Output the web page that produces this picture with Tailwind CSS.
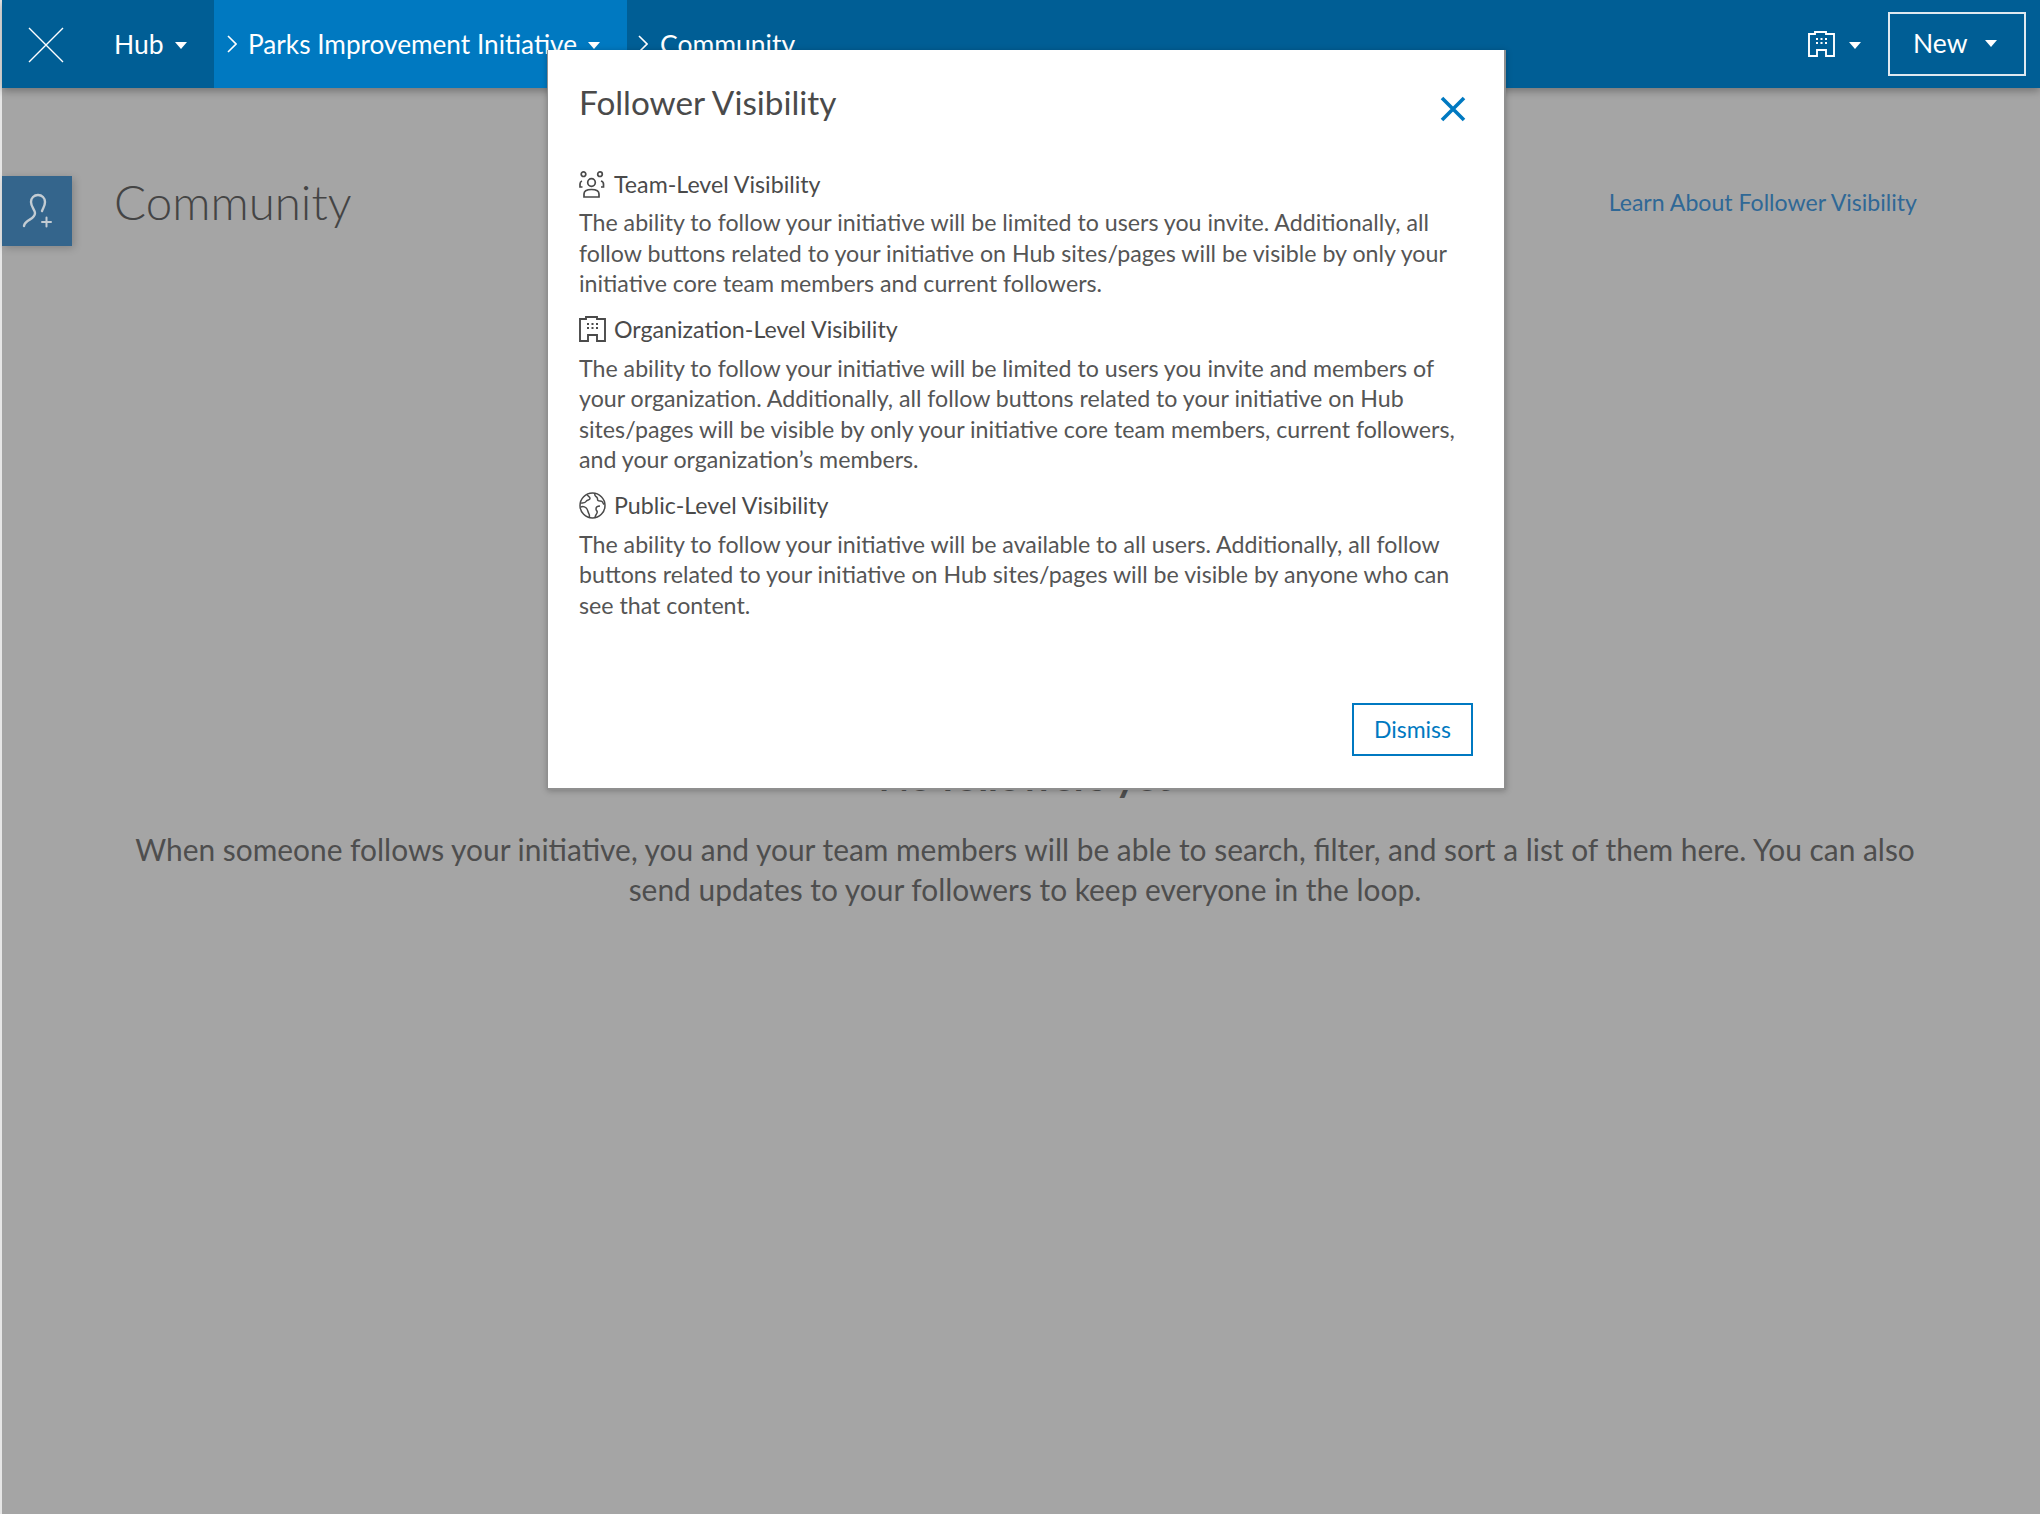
<!DOCTYPE html>
<html lang="en">
<head>
  <meta charset="UTF-8">
  <title>Community</title>
  <script src="https://cdn.jsdelivr.net/npm/@tailwindcss/browser@4"></script>
</head>
<body class="relative h-[1514px] overflow-hidden bg-[#e6e6e6] pl-[2px] font-['Lato','Liberation_Sans',sans-serif]">

  <div class="h-full bg-[#a5a5a5]">
    <!-- top bar -->
    <header class="relative z-10 flex h-[88px] items-center bg-[#005e95] text-white shadow-[0_3px_8px_rgba(0,0,0,0.3)]">
      <div class="flex h-full w-[212px] items-center">
        <svg class="ml-[26px] mt-[2px] h-[36px] w-[36px]" viewBox="0 0 36 36" fill="none" stroke="white" stroke-width="1.4"><path d="M1 1 L35 35 M35 1 L1 35"/></svg>
        <span class="ml-[50px] mt-[2px] text-[26.500px]">Hub</span>
        <svg class="ml-[11px] mt-[2px] h-[7px] w-[12px]" viewBox="0 0 12 7" fill="white"><path d="M0 0h12L6 7z"/></svg>
      </div>
      <div class="flex h-full w-[413px] items-center bg-[#0079c1]">
        <svg class="ml-[13px] h-[18px] w-[10px]" viewBox="0 0 10 18" fill="none" stroke="white" stroke-width="1.6"><path d="M1 1l8 8-8 8"/></svg>
        <span class="ml-[11px] mt-[2px] text-[26.200px]">Parks Improvement Initiative</span>
        <svg class="ml-[11px] mt-[2px] h-[7px] w-[12px]" viewBox="0 0 12 7" fill="white"><path d="M0 0h12L6 7z"/></svg>
      </div>
      <svg class="ml-[11px] h-[18px] w-[10px]" viewBox="0 0 10 18" fill="none" stroke="white" stroke-width="1.6"><path d="M1 1l8 8-8 8"/></svg>
      <span class="ml-[12px] mt-[2px] text-[26.500px]">Community</span>

      <div class="ml-auto flex items-center">
        <svg class="h-[26px] w-[27px]" viewBox="0 0 27 26" fill="none" stroke="white" stroke-width="1.9"><path d="M1 25V3h6V1h11v2h8v22h-8v-6H9v6z"/><path d="M8 8h2M12.500 8h2M17 8h2M8 12h2M12.500 12h2M17 12h2" stroke-width="2"/></svg>
        <svg class="ml-[14px] mt-[2px] h-[7px] w-[12px]" viewBox="0 0 12 7" fill="white"><path d="M0 0h12L6 7z"/></svg>
        <button class="ml-[27px] mr-[14px] flex h-[64px] w-[138px] items-center border-2 border-[#dfe9f0] pl-[23px]">
          <span class="text-[26.500px]">New</span>
          <svg class="ml-[17px] mt-[-2px] h-[7px] w-[12px]" viewBox="0 0 12 7" fill="white"><path d="M0 0h12L6 7z"/></svg>
        </button>
      </div>
    </header>

    <!-- page title -->
    <section class="flex items-start pt-[88px]">
      <div class="flex h-[70px] w-[70px] items-center justify-center bg-[#34658c] shadow-[2px_2px_8px_rgba(0,0,0,0.2)]">
        <svg class="h-[70px] w-[70px]" viewBox="0 0 70 70" fill="none" stroke="#c3ccd3" stroke-width="2.4" stroke-linecap="round"><path d="M22 50c1-7 11-6 11-13 0-3-4-6-4-11 0-4 3-7 7-7s7 3 7 7c0 4-2 6-3 9"/><path d="M40 46h9M44.500 41.500v9" stroke-width="2"/></svg>
      </div>
      <h1 class="ml-[42px] mt-[-2px] text-[47.500px] font-light leading-[56px] text-[#444444]">Community</h1>
      <a class="ml-auto mr-[123px] mt-[10px] text-[23.100px] leading-[32px] text-[#2f6896]">Learn About Follower Visibility</a>
    </section>

    <!-- empty state -->
    <section class="mt-[508px] pl-[8px] text-center text-[#4e4e4e]">
      <h2 class="text-[40px] font-bold leading-[44px]">No followers yet</h2>
      <p class="mt-[31px] text-[29.900px] leading-[40px]">When someone follows your initiative, you and your team members will be able to search, filter, and sort a list of them here. You can also<br>send updates to your followers to keep everyone in the loop.</p>
    </section>
  </div>

  <!-- modal -->
  <div class="absolute left-[547px] top-[50px] z-20 h-[740px] w-[959px] border-r-2 border-b-2 border-l border-[#8f8f8f] bg-white shadow-[0_1px_6px_rgba(0,0,0,0.25)] text-[#4a4a4a]">
    <div class="flex items-start justify-between pl-[31px] pr-[38px] pt-[30px]">
      <h2 class="text-[33.300px] leading-[44px]">Follower Visibility</h2>
      <svg class="mt-[16px] h-[26px] w-[26px]" viewBox="0 0 26 26" fill="none" stroke="#0079c1" stroke-width="3.6"><path d="M2 2l22 22M24 2L2 24"/></svg>
    </div>

    <div class="mt-[44px] pl-[31px] text-[23.200px] leading-[30.500px]">
      <h3 class="flex h-[32px] items-center">
        <svg class="mr-[8px] h-[27px] w-[27px] shrink-0" viewBox="0 0 27 27" fill="none" stroke="#4a4a4a" stroke-width="1.700"><circle cx="12.500" cy="11.500" r="3.800"/><circle cx="4.500" cy="3.200" r="2.300"/><circle cx="21" cy="3.200" r="2.300"/><path d="M5 26v-3c0-3 3-4.500 7.500-4.500S20 20 20 23v3zM3 10c-1.500.500-2 1.500-2 3v3h2.500M22 10c1.500.500 2.500 1.500 2.500 3v3H22"/></svg>
        Team-Level Visibility
      </h3>
      <p class="mt-[7px] text-[#555555]">The ability to follow your initiative will be limited to users you invite. Additionally, all<br>follow buttons related to your initiative on Hub sites/pages will be visible by only your<br>initiative core team members and current followers.</p>

      <h3 class="mt-[15px] flex h-[32px] items-center">
        <svg class="mr-[8px] h-[27px] w-[27px] shrink-0" viewBox="0 0 27 27" fill="none" stroke="#4a4a4a" stroke-width="1.900"><path d="M1 25V3h6V1h11v2h8v22h-8v-6H9v6z"/><path d="M8 8h2M12.500 8h2M17 8h2M8 12h2M12.500 12h2M17 12h2" stroke-width="2"/></svg>
        Organization-Level Visibility
      </h3>
      <p class="mt-[7px] text-[#555555]">The ability to follow your initiative will be limited to users you invite and members of<br>your organization. Additionally, all follow buttons related to your initiative on Hub<br>sites/pages will be visible by only your initiative core team members, current followers,<br>and your organization’s members.</p>

      <h3 class="mt-[15px] flex h-[32px] items-center">
        <svg class="mr-[8px] h-[27px] w-[27px] shrink-0" viewBox="0 0 27 27" fill="none" stroke="#4a4a4a" stroke-width="1.500"><circle cx="13.500" cy="13.500" r="12.500"/><path d="M8 2.500c1 2 3 2 3 4s-3 1-4 3-5 1-5.500 2M2 15c2-1 5 0 6 2s1 3 2 5 0 3 .500 4M16 1.500c-1 2 1 3 2 4s0 2 1 3 3 0 4 1 1 2 2 3M21 14c-2 0-4 1-4 3s2 2 1 4-2 3-2 4.500"/></svg>
        Public-Level Visibility
      </h3>
      <p class="mt-[7px] text-[#555555]">The ability to follow your initiative will be available to all users. Additionally, all follow<br>buttons related to your initiative on Hub sites/pages will be visible by anyone who can<br>see that content.</p>
    </div>

    <button class="absolute bottom-[32px] right-[31px] h-[53px] w-[121px] border-2 border-[#0079c1] text-[23px] text-[#0079c1]">Dismiss</button>
  </div>

</body>
</html>
